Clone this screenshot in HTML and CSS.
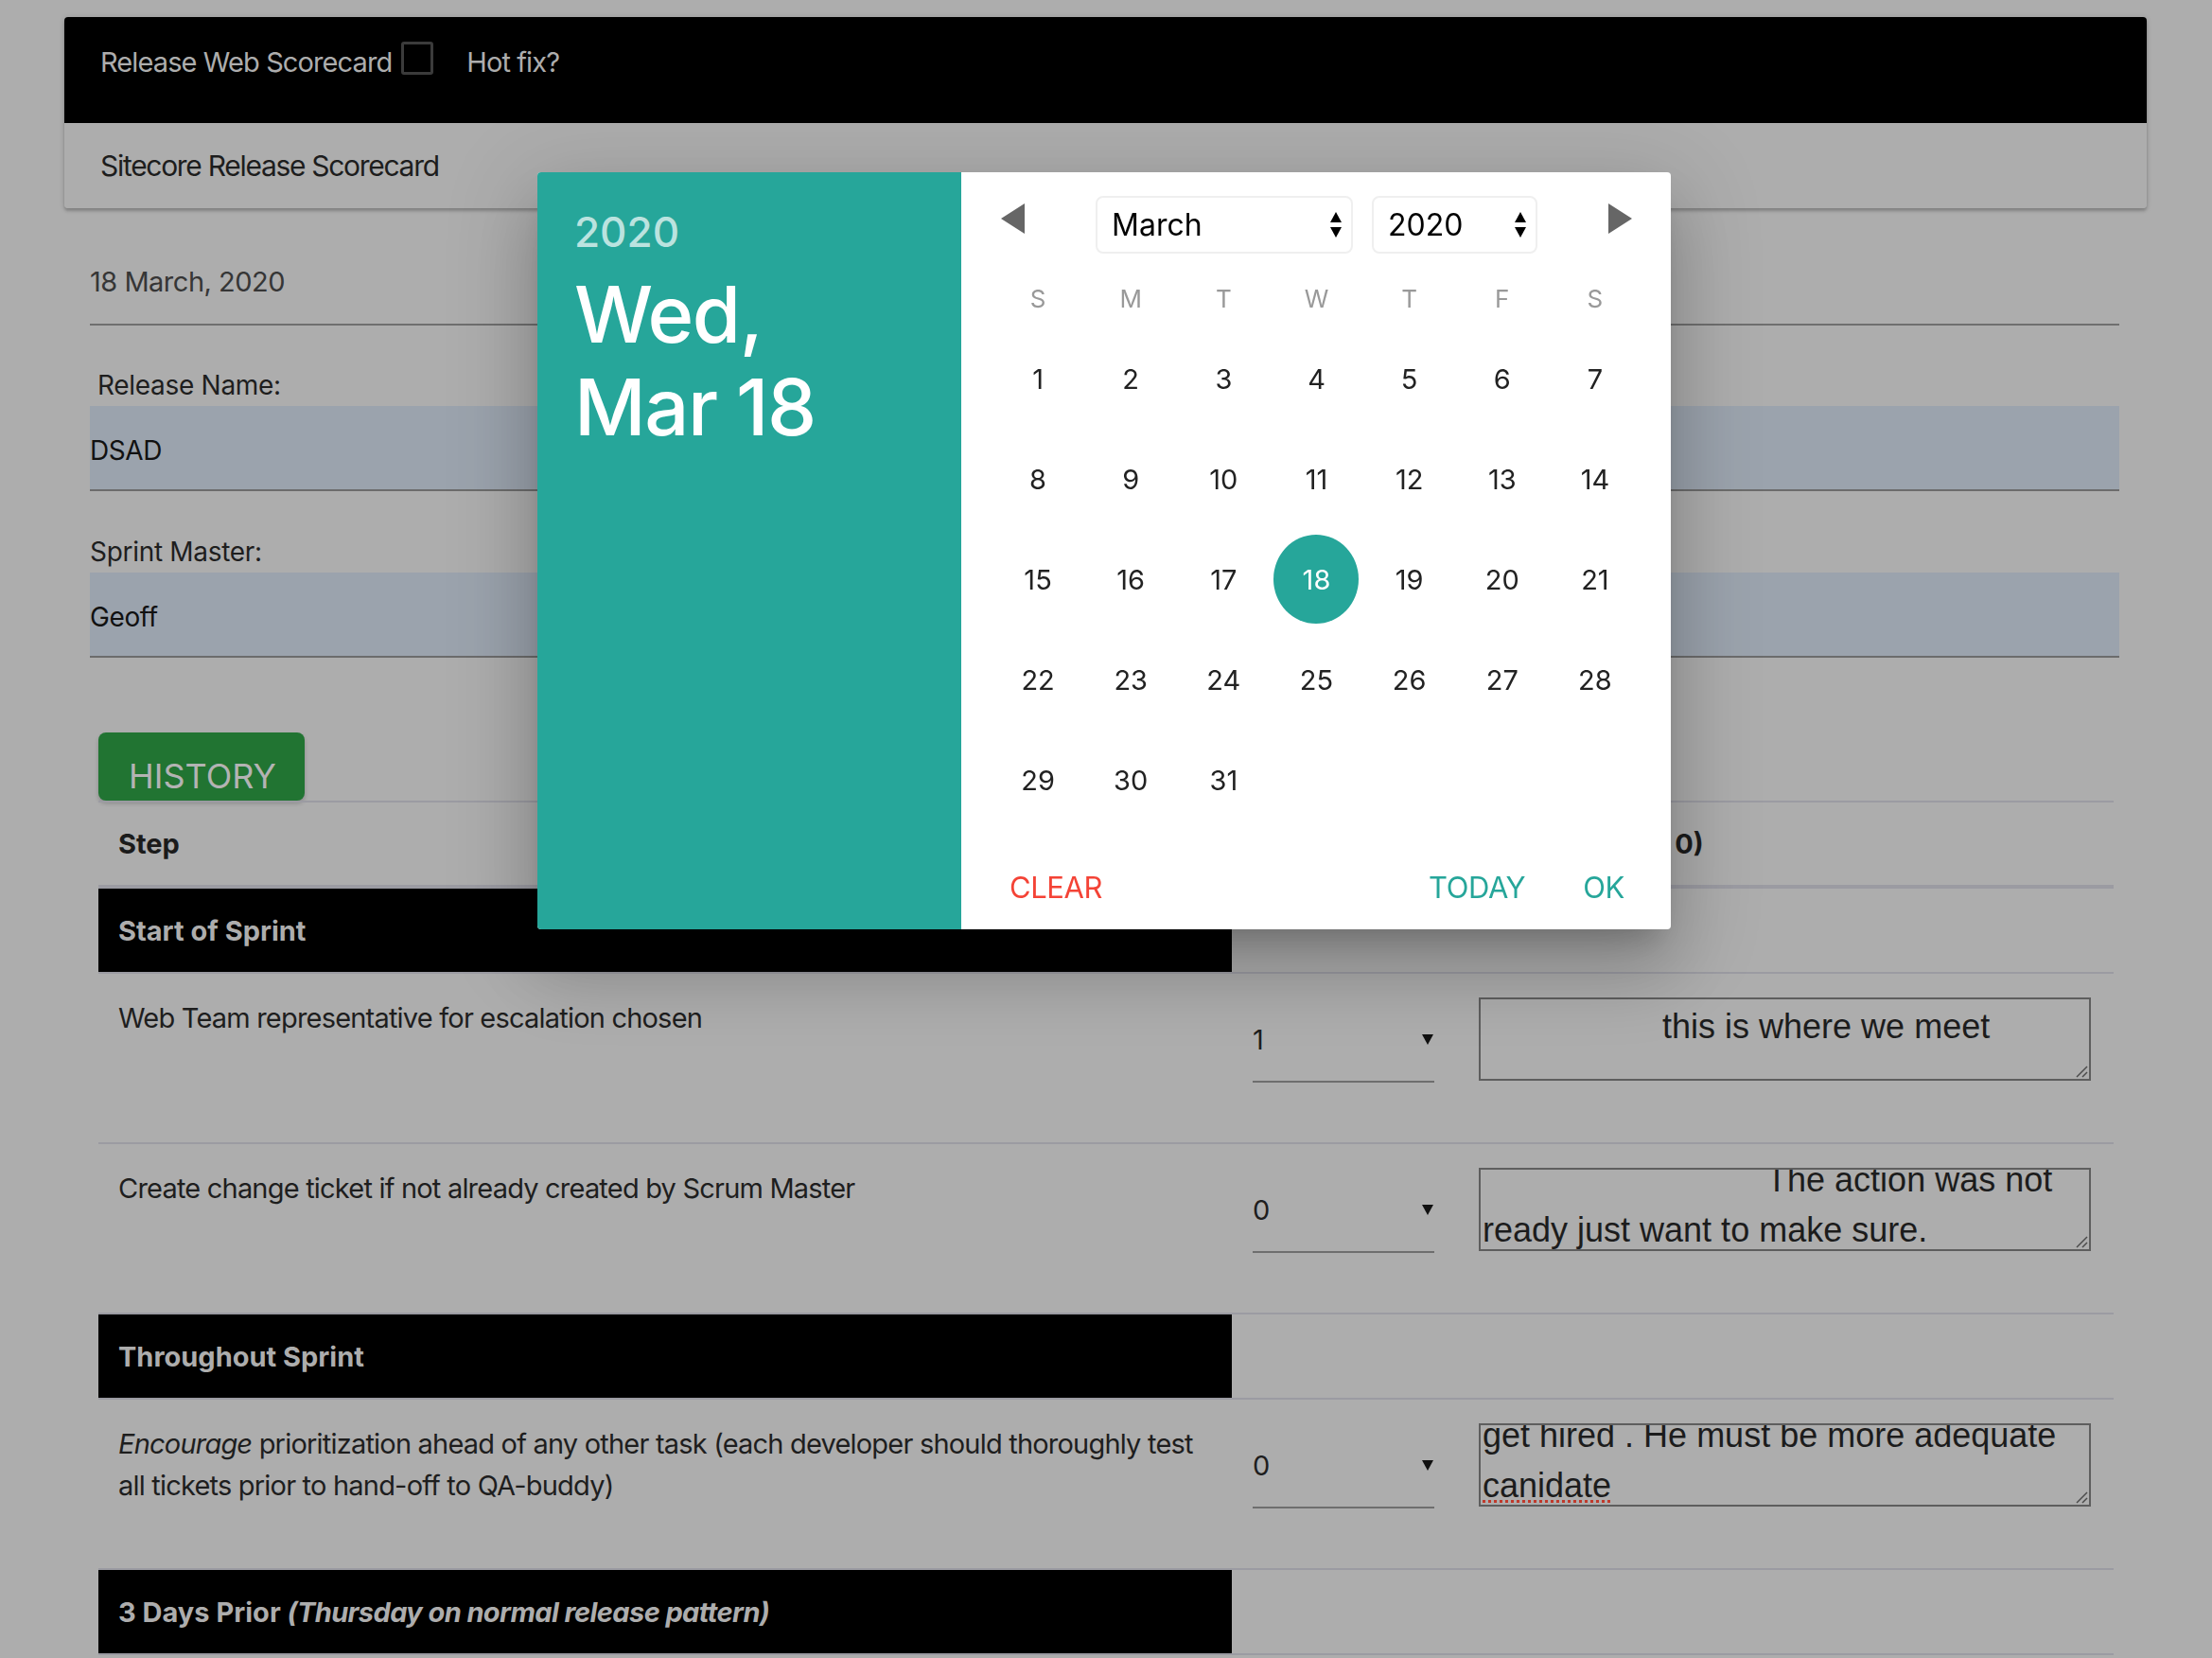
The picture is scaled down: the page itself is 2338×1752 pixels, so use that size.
FILE: index.html
```html
<!DOCTYPE html>
<html lang="en">
<head>
<meta charset="utf-8">
<title>Release Web Scorecard</title>
<link rel="stylesheet" href="styles.css">
</head>
<body>
<div class="page">
  <div class="card">
    <div class="card-top">
      <span class="card-title">Release Web Scorecard</span>
      <span class="chk"></span>
      <span class="card-title hotfix">Hot fix?</span>
    </div>
    <div class="card-sub">Sitecore Release Scorecard</div>
  </div>

  <div class="form">
    <div class="date-field">18 March, 2020</div>
    <label class="lbl lbl-name">Release Name:</label>
    <div class="input">DSAD</div>
    <label class="lbl lbl-master">Sprint Master:</label>
    <div class="input">Geoff</div>
  </div>

  <div class="section">
    <button class="history">HISTORY</button>
    <table class="steps">
      <colgroup><col class="c-step"><col class="c-score"><col class="c-notes"></colgroup>
      <thead>
        <tr><th class="th-step">Step</th><th></th><th class="th-notes">Response (1 / 0)</th></tr>
      </thead>
      <tbody>
        <tr class="sec"><td class="sec-cell">Start of Sprint</td><td></td><td></td></tr>
        <tr class="item">
          <td class="step-text">Web Team representative for escalation chosen</td>
          <td class="score"><div class="sel"><span>1</span><svg class="sel-arrow" viewBox="0 0 12 12"><polygon points="0,1 12,1 6,12" /></svg></div></td>
          <td class="notes"><div class="ta"><div class="ta-text">                   this is where we meet</div><svg class="grip" viewBox="0 0 14 14"><line x1="2" y1="13" x2="13" y2="2"/><line x1="8" y1="13" x2="13" y2="8"/></svg></div></td>
        </tr>
        <tr class="item">
          <td class="step-text">Create change ticket if not already created by Scrum Master</td>
          <td class="score"><div class="sel"><span>0</span><svg class="sel-arrow" viewBox="0 0 12 12"><polygon points="0,1 12,1 6,12" /></svg></div></td>
          <td class="notes"><div class="ta"><div class="ta-text ta-scrolled">                              The action was not ready just want to make sure.</div><svg class="grip" viewBox="0 0 14 14"><line x1="2" y1="13" x2="13" y2="2"/><line x1="8" y1="13" x2="13" y2="8"/></svg></div></td>
        </tr>
        <tr class="sec"><td class="sec-cell">Throughout Sprint</td><td></td><td></td></tr>
        <tr class="item">
          <td class="step-text"><em>Encourage</em> prioritization ahead of any other task (each developer should thoroughly test all tickets prior to hand-off to QA-buddy)</td>
          <td class="score"><div class="sel"><span>0</span><svg class="sel-arrow" viewBox="0 0 12 12"><polygon points="0,1 12,1 6,12" /></svg></div></td>
          <td class="notes"><div class="ta"><div class="ta-text ta-scrolled">get hired . He must be more adequate <span class="typo">canidate</span></div><svg class="grip" viewBox="0 0 14 14"><line x1="2" y1="13" x2="13" y2="2"/><line x1="8" y1="13" x2="13" y2="8"/></svg></div></td>
        </tr>
        <tr class="sec"><td class="sec-cell">3 Days Prior <em>(Thursday on normal release pattern)</em></td><td></td><td></td></tr>
      </tbody>
    </table>
  </div>
</div>

<div class="picker">
  <div class="pk-display">
    <div class="pk-year">2020</div>
    <div class="pk-date">Wed,<br>Mar 18</div>
  </div>
  <div class="pk-cal">
    <div class="pk-nav">
      <svg class="pk-arrow pk-prev" viewBox="0 0 25 32"><polygon points="25,0 25,32 0,16"/></svg>
      <div class="pk-select pk-month"><span>March</span><svg class="updown" viewBox="0 0 12 27"><polygon points="6,0 12,11 0,11"/><polygon points="0,16 12,16 6,27"/></svg></div>
      <div class="pk-select pk-yr"><span>2020</span><svg class="updown" viewBox="0 0 12 27"><polygon points="6,0 12,11 0,11"/><polygon points="0,16 12,16 6,27"/></svg></div>
      <svg class="pk-arrow pk-next" viewBox="0 0 25 32"><polygon points="0,0 25,16 0,32"/></svg>
    </div>
    <div class="pk-week">
      <span>S</span><span>M</span><span>T</span><span>W</span><span>T</span><span>F</span><span>S</span>
    </div>
    <div class="pk-days">
      <span>1</span><span>2</span><span>3</span><span>4</span><span>5</span><span>6</span><span>7</span>
      <span>8</span><span>9</span><span>10</span><span>11</span><span>12</span><span>13</span><span>14</span>
      <span>15</span><span>16</span><span>17</span><span><b class="is-selected">18</b></span><span>19</span><span>20</span><span>21</span>
      <span>22</span><span>23</span><span>24</span><span>25</span><span>26</span><span>27</span><span>28</span>
      <span>29</span><span>30</span><span>31</span>
    </div>
    <div class="pk-foot">
      <span class="pk-btn pk-clear">CLEAR</span>
      <span class="pk-spacer"></span>
      <span class="pk-btn">TODAY</span>
      <span class="pk-btn pk-ok">OK</span>
    </div>
  </div>
</div>
</body>
</html>
```

FILE: styles.css
```css
* { box-sizing: border-box; }
html, body { margin: 0; padding: 0; }
body {
  width: 2338px;
  height: 1752px;
  overflow: hidden;
  background: #adadad;
  font-family: Inter, "Noto Sans", sans-serif;
  color: #1e1e1e;
}

.page { padding-top: 18px; }

/* header card */
.card {
  margin: 0 69px 0 68px;
  border-radius: 4px;
  overflow: hidden;
  box-shadow: 0 3px 3px rgba(0,0,0,0.18), 0 1px 6px rgba(0,0,0,0.14);
}
.card-top {
  background: #000;
  height: 112px;
  display: flex;
  align-items: flex-start;
  padding: 26px 0 0 38px;
}
.card-title {
  color: #adadad;
  font-size: 29px;
  line-height: 35px;
  letter-spacing: -0.9px;
  margin-top: 4px;
}
.chk {
  width: 34px;
  height: 35px;
  margin-left: 10px;
  border: 3px solid #3b3b3b;
  border-radius: 3px;
}
.hotfix { margin-left: 35px; }
.card-sub {
  height: 90px;
  padding: 27px 0 0 38px;
  font-size: 30px;
  line-height: 36px;
  letter-spacing: -1.3px;
  color: #1d1d1d;
  background: #adadad;
}

/* form */
.form { margin: 0 98px 0 95px; }
.date-field {
  margin-top: 56px;
  font-size: 29px;
  line-height: 44px;
  letter-spacing: -0.5px;
  padding-bottom: 22px;
  border-bottom: 2px solid #6f6f6f;
  color: #363636;
}
.lbl {
  display: block;
  font-size: 28px;
  line-height: 44px;
  letter-spacing: -0.3px;
  color: #1e1e1e;
}
.lbl-name { margin-top: 41px; padding-left: 8px; }
.lbl-master { margin-top: 42px; }
.input {
  height: 90px;
  padding-top: 3px;
  background: #9ba3ad;
  border-bottom: 2px solid #6c6c6c;
  font-size: 28px;
  line-height: 88px;
  letter-spacing: -0.4px;
  color: #111;
  overflow: hidden;
}

/* steps */
.section { margin: 79px 0 0 104px; width: 2130px; }
.history {
  display: block;
  width: 218px;
  height: 72px;
  padding: 20px 0 0 32px;
  border: 0;
  border-radius: 8px;
  background: #217432;
  color: #b3b3b3;
  font-family: Inter, "Noto Sans", sans-serif;
  font-size: 36px;
  line-height: 44px;
  text-align: left;
  overflow: hidden;
  box-shadow: 0 3px 4px rgba(0,0,0,0.2);
}
.steps {
  width: 2130px;
  table-layout: fixed;
  border-collapse: separate;
  border-spacing: 0;
  border-top: 2px solid #9b9ba2;
  font-size: 29px;
}
.c-step { width: 1198px; }
.c-score { width: 239px; }
.c-notes { width: 693px; }
.steps th {
  height: 91px;
  padding: 0 0 0 21px;
  border-bottom: 4px solid #9b9ba2;
  text-align: left;
  font-weight: 700;
  vertical-align: middle;
  color: #1b1b1b;
  white-space: nowrap;
}
.steps th.th-notes { padding-left: 34px; }
.steps td { border-bottom: 2px solid #9b9ba2; }
.sec td { height: 90px; padding: 0; vertical-align: middle; }
.sec td.sec-cell {
  background: #000;
  color: #adadad;
  font-weight: 700;
  padding-left: 21px;
}
.sec-cell em { letter-spacing: -0.6px; }
.item td { height: 180px; vertical-align: top; padding: 25px 0 0 22px; }
.item td.step-text {
  padding: 25px 20px 0 21px;
  line-height: 44px;
  letter-spacing: -0.8px;
  color: #1e1e1e;
}
.sel {
  width: 192px;
  height: 90px;
  border-bottom: 2px solid #6e6e6e;
  display: flex;
  align-items: center;
  justify-content: space-between;
  font-size: 29px;
  color: #1e1e1e;
}
.sel-arrow { width: 12px; height: 12px; fill: #111; margin-right: 1px; }
.ta {
  position: relative;
  width: 647px;
  height: 88px;
  border: 2px solid #5e5e5e;
  padding: 2px;
  overflow: hidden;
  font-family: "Liberation Sans", Arial, sans-serif;
  font-size: 36px;
  line-height: 53px;
  color: #1c1c1c;
}
.ta-text { white-space: pre-wrap; }
.ta-scrolled { margin-top: -18px; }
.typo {
  text-decoration: underline dotted #c0392b;
  text-decoration-thickness: 3px;
  text-underline-offset: 3px;
}
.grip {
  position: absolute;
  right: 1px;
  bottom: 1px;
  width: 14px;
  height: 14px;
  stroke: #4a4a4a;
  stroke-width: 1.5;
}

/* date picker */
.picker {
  position: fixed;
  left: 568px;
  top: 182px;
  width: 1198px;
  height: 800px;
  display: flex;
  background: #fff;
  border-radius: 4px;
  overflow: hidden;
  box-shadow: 0 48px 76px 6px rgba(0,0,0,0.14), 0 18px 92px 16px rgba(0,0,0,0.12), 0 22px 30px -14px rgba(0,0,0,0.2);
}
.pk-display {
  width: 448px;
  flex: none;
  background: #26a69a;
  padding: 37px 39px;
  color: #fff;
}
.pk-year {
  font-size: 44px;
  line-height: 53px;
  font-weight: 500;
  color: rgba(255,255,255,0.7);
}
.pk-date {
  margin-top: 11px;
  font-size: 83px;
  line-height: 98px;
  font-weight: 500;
  letter-spacing: -1.5px;
}
.pk-cal {
  flex: 1;
  display: flex;
  flex-direction: column;
  padding: 25px 31px 0 32px;
}
.pk-nav { height: 61px; display: flex; align-items: center; }
.pk-arrow { width: 25px; height: 32px; fill: #666; flex: none; margin-bottom: 14px; }
.pk-prev { margin-left: 10px; }
.pk-next { margin-left: 75px; }
.pk-select {
  height: 61px;
  border: 2px solid #efefef;
  border-radius: 8px;
  display: flex;
  align-items: center;
  justify-content: space-between;
  font-size: 32px;
  color: #000;
  padding: 0 10px 0 15px;
}
.pk-month { width: 272px; margin-left: 75px; }
.pk-yr { width: 175px; margin-left: 20px; }
.updown { width: 12px; height: 27px; fill: #000; }
.pk-week, .pk-days {
  display: grid;
  grid-template-columns: repeat(7, 98.15px);
}
.pk-week {
  margin-top: 15px;
  height: 64px;
  align-items: center;
  text-align: center;
  font-size: 26px;
  color: #999;
}
.pk-days {
  grid-auto-rows: 106px;
  font-size: 29px;
  color: #222;
}
.pk-days span {
  display: flex;
  align-items: center;
  justify-content: center;
}
.is-selected {
  width: 90px;
  height: 94px;
  border-radius: 50%;
  background: #26a69a;
  color: #fff;
  font-weight: 400;
  display: flex;
  align-items: center;
  justify-content: center;
}
.pk-foot {
  margin-top: 38px;
  height: 44px;
  display: flex;
  align-items: center;
  padding: 0 18px 0 19px;
}
.pk-btn { font-size: 31px; letter-spacing: -0.4px; color: #26a69a; }
.pk-clear { color: #f44336; }
.pk-spacer { flex: 1; }
.pk-ok { margin-left: 61px; }
```
